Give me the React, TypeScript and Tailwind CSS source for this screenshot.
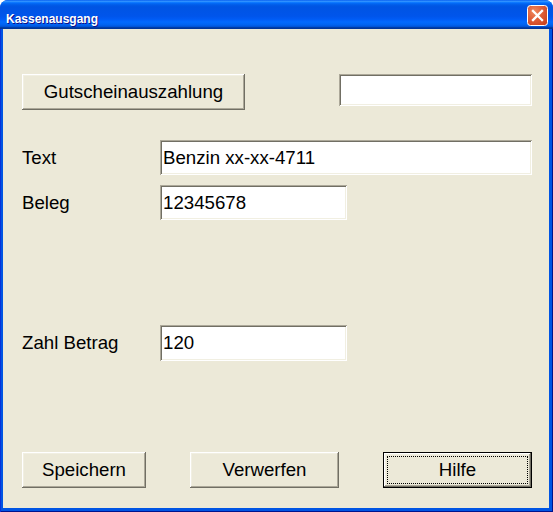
import React from "react";

const font = "font-['Liberation_Sans',Arial,sans-serif] text-[18.67px] text-black";

function Btn({ label, w, def }: { label: string; w: string; def?: boolean }) {
  return (
    <div
      className={`relative ${w} h-[36px] flex items-center justify-center bg-[#ece9d8] ${font} ${
        def
          ? "shadow-[inset_0_0_0_1px_#000,inset_-2px_-2px_#716f64,inset_2px_2px_#fff,inset_-3px_-3px_#aca899,inset_3px_3px_#f1efe2]"
          : "shadow-[inset_-1px_-1px_#716f64,inset_1px_1px_#fff,inset_-2px_-2px_#aca899,inset_2px_2px_#f1efe2]"
      }`}
    >
      <span className="leading-none">{label}</span>
      {def && <span className="absolute inset-[4px] border border-dotted border-black" />}
    </div>
  );
}

function Field({ value, w, h }: { value?: string; w: string; h: string }) {
  return (
    <div
      className={`${w} ${h} bg-white pl-[3px] pt-[4px] whitespace-nowrap overflow-hidden ${font} leading-normal shadow-[inset_1px_1px_#aca899,inset_-1px_-1px_#fff,inset_2px_2px_#716f64,inset_-2px_-2px_#f1efe2]`}
    >
      {value}
    </div>
  );
}

export default function App() {
  return (
    <div className="w-[553px] h-[512px] flex flex-col bg-[#0054e3] rounded-t-[8px] overflow-hidden">
      <div className="h-[29px] shrink-0 flex items-start justify-between pl-[6px] pr-[5px] bg-[linear-gradient(to_bottom,#0058ee_0%,#3593ff_4%,#288eff_6%,#127dff_8%,#036ffc_10%,#0262ee_14%,#0057e5_20%,#0054e3_24%,#0055eb_56%,#005bf5_66%,#026afe_76%,#0062ef_86%,#0052d6_92%,#0040ab_94%,#003092_100%)]">
        <span className="mt-[10px] font-['Liberation_Sans',Arial,sans-serif] font-bold text-[12px] leading-normal text-white [text-shadow:1px_1px_#0f1089]">
          Kassenausgang
        </span>
        <svg width="21" height="21" viewBox="0 0 21 21" className="mt-[5px]">
          <defs>
            <radialGradient id="cg" cx="35%" cy="30%" r="85%">
              <stop offset="0%" stopColor="#ef8a5f" />
              <stop offset="45%" stopColor="#e0603a" />
              <stop offset="100%" stopColor="#c8401c" />
            </radialGradient>
          </defs>
          <rect x="0.5" y="0.5" width="20" height="20" rx="3" fill="url(#cg)" stroke="#ffffff" />
          <path d="M6 6 L15 15 M15 6 L6 15" stroke="#ffffff" strokeWidth="2.3" strokeLinecap="square" />
        </svg>
      </div>
      <div className="flex-1 flex pl-[3px] pr-[4px] pb-[4px] shadow-[inset_1px_0_#0831d9,inset_-1px_-1px_#00138c]">
        <div className="flex-1 flex flex-col bg-[#ece9d8] pl-[19px] pr-[17px] pt-[45px]">
          <div className="flex justify-between items-start">
            <Btn label="Gutscheinauszahlung" w="w-[223px]" />
            <Field w="w-[193px]" h="h-[32px]" />
          </div>
          <div className="mt-[30px] flex items-center">
            <span className={`w-[138px] ${font}`}>Text</span>
            <Field value="Benzin xx-xx-4711" w="w-[372px]" h="h-[35px]" />
          </div>
          <div className="mt-[10px] flex items-center">
            <span className={`w-[138px] ${font}`}>Beleg</span>
            <Field value="12345678" w="w-[187px]" h="h-[35px]" />
          </div>
          <div className="mt-[105px] flex items-center">
            <span className={`w-[138px] ${font}`}>Zahl Betrag</span>
            <Field value="120" w="w-[187px]" h="h-[36px]" />
          </div>
          <div className="mt-[91px] flex gap-[44px]">
            <Btn label="Speichern" w="w-[124px]" />
            <Btn label="Verwerfen" w="w-[149px]" />
            <Btn label="Hilfe" w="w-[149px]" def />
          </div>
        </div>
      </div>
    </div>
  );
}
